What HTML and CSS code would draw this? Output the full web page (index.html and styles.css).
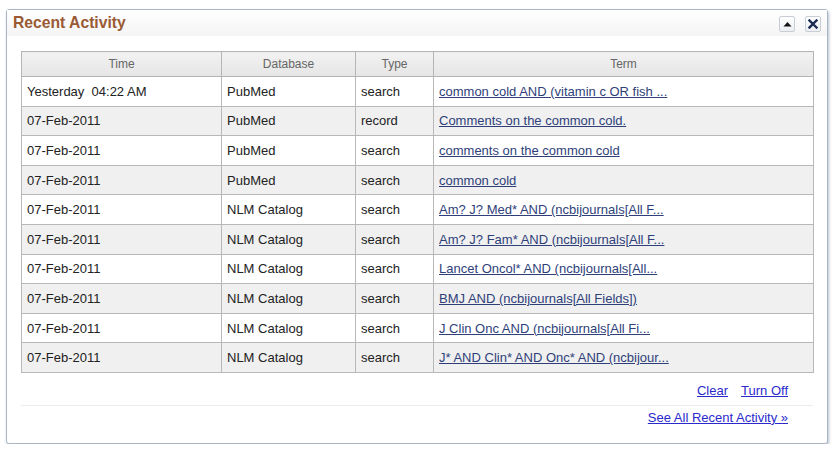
FILE: index.html
```html
<!DOCTYPE html>
<html>
<head>
<meta charset="utf-8">
<link rel="stylesheet" href="styles.css">
</head>
<body>
<div class="panel">
  <div class="panel-head">
    <h2 class="title">Recent Activity</h2>
    <div class="tools">
      <span class="tool-btn"><svg width="9" height="6" viewBox="0 0 9 6"><path d="M0.5 5.5 L4.5 1 L8.5 5.5 Z" fill="#111"/></svg></span>
      <span class="tool-btn"><svg width="10" height="10" viewBox="0 0 10 10"><path d="M1.5 1.5 L8.5 8.5 M8.5 1.5 L1.5 8.5" stroke="#1b2a55" stroke-width="2.4" stroke-linecap="square"/></svg></span>
    </div>
  </div>
  <div class="panel-body">
    <table class="activity">
      <colgroup>
        <col class="c-time"><col class="c-db"><col class="c-type"><col class="c-term">
      </colgroup>
      <thead>
        <tr><th>Time</th><th>Database</th><th>Type</th><th>Term</th></tr>
      </thead>
      <tbody>
        <tr><td>Yesterday&nbsp; 04:22 AM</td><td>PubMed</td><td>search</td><td><a href="#">common cold AND (vitamin c OR fish ...</a></td></tr>
        <tr class="alt"><td>07-Feb-2011</td><td>PubMed</td><td>record</td><td><a href="#">Comments on the common cold.</a></td></tr>
        <tr><td>07-Feb-2011</td><td>PubMed</td><td>search</td><td><a href="#">comments on the common cold</a></td></tr>
        <tr class="alt"><td>07-Feb-2011</td><td>PubMed</td><td>search</td><td><a href="#">common cold</a></td></tr>
        <tr><td>07-Feb-2011</td><td>NLM Catalog</td><td>search</td><td><a href="#">Am? J? Med* AND (ncbijournals[All F...</a></td></tr>
        <tr class="alt"><td>07-Feb-2011</td><td>NLM Catalog</td><td>search</td><td><a href="#">Am? J? Fam* AND (ncbijournals[All F...</a></td></tr>
        <tr><td>07-Feb-2011</td><td>NLM Catalog</td><td>search</td><td><a href="#">Lancet Oncol* AND (ncbijournals[All...</a></td></tr>
        <tr class="alt"><td>07-Feb-2011</td><td>NLM Catalog</td><td>search</td><td><a href="#">BMJ AND (ncbijournals[All Fields])</a></td></tr>
        <tr><td>07-Feb-2011</td><td>NLM Catalog</td><td>search</td><td><a href="#">J Clin Onc AND (ncbijournals[All Fi...</a></td></tr>
        <tr class="alt"><td>07-Feb-2011</td><td>NLM Catalog</td><td>search</td><td><a href="#">J* AND Clin* AND Onc* AND (ncbijour...</a></td></tr>
      </tbody>
    </table>
    <div class="actions">
      <a href="#" class="act">Clear</a>
      <a href="#" class="act">Turn Off</a>
    </div>
    <div class="see-all">
      <a href="#" class="act">See All Recent Activity »</a>
    </div>
  </div>
</div>
</body>
</html>
```

FILE: styles.css
```css
html, body {
  margin: 0;
  padding: 0;
  background: #fff;
}
body {
  font-family: "Liberation Sans", Arial, sans-serif;
  padding: 9px 7px 0 6px;
}
.panel {
  width: 820px;
  height: 433px;
  border: 1px solid #a9b6c6;
  border-radius: 3px;
  box-shadow: 1px 2px 3px rgba(90, 110, 140, 0.45);
  background: #fff;
  display: flex;
  flex-direction: column;
}
.panel-head {
  height: 26px;
  display: flex;
  align-items: center;
  justify-content: space-between;
  padding: 0 6px 0 6px;
  background: linear-gradient(#ffffff, #f4f4f4);
}
.title {
  margin: 0;
  font-size: 15.7px;
  font-weight: bold;
  color: #9a5a34;
  margin-top: -1px;
}
.tools {
  display: flex;
  gap: 10px;
  padding-top: 2px;
}
.tool-btn {
  width: 14px;
  height: 14px;
  border: 1px solid #c9ced6;
  border-radius: 2px;
  background: linear-gradient(#ffffff, #eceef1);
  display: flex;
  align-items: center;
  justify-content: center;
}
.panel-body {
  padding: 15px 14px 0 14px;
}
.activity {
  width: 793px;
  border-collapse: collapse;
  font-size: 13px;
  color: #222;
  border: 1px solid #a8a8a8;
}
.c-time { width: 200px; }
.c-db { width: 134px; }
.c-type { width: 78px; }
.c-term { width: auto; }
.activity th {
  height: 24px;
  padding: 0;
  font-size: 12px;
  font-weight: normal;
  color: #666;
  background: linear-gradient(#f2f2f2, #e6e6e6);
  border: 1px solid #b5b5b5;
  text-align: center;
}
.activity td {
  height: 28.6px;
  padding: 0 0 0 5px;
  border: 1px solid #b8b8b8;
  white-space: nowrap;
}
.activity tr.alt td {
  background: #f0f0f0;
}
.activity a {
  color: #2f3f7a;
  text-decoration: underline;
}
.actions {
  display: flex;
  justify-content: flex-end;
  gap: 13px;
  padding: 10px 25px 0 0;
  height: 22px;
  border-bottom: 1px solid #ececec;
}
.act {
  font-size: 13px;
  color: #2a2acc;
  text-decoration: underline;
}
.see-all {
  display: flex;
  justify-content: flex-end;
  padding: 4px 25px 0 0;
}
```
